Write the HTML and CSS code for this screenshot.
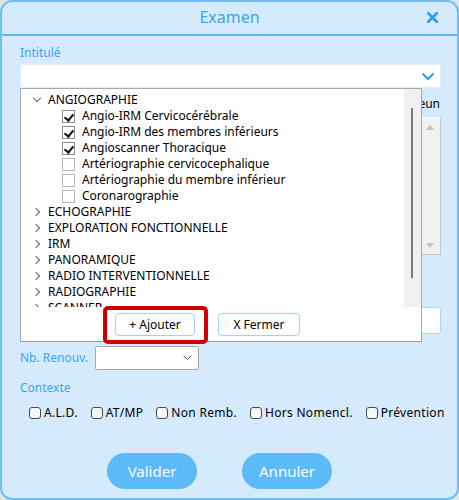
FILE: index.html
```html
<!DOCTYPE html>
<html lang="fr">
<head>
<meta charset="utf-8">
<link rel="stylesheet" href="styles.css">
</head>
<body>
<div class="dialog">
  <div class="titlebar">
    <span class="title">Examen</span>
    <span class="close"><svg width="11" height="11" viewBox="0 0 11 11"><path d="M1 1L10 10M10 1L1 10" stroke="#2f9ded" stroke-width="2.6" stroke-linecap="round"/></svg></span>
  </div>
  <div class="content">
    <div class="label">Intitulé</div>
    <div class="combo"><svg width="14" height="9" viewBox="0 0 14 9"><path d="M1.5 1.5L7 7L12.5 1.5" fill="none" stroke="#2f9ded" stroke-width="2"/></svg></div>
    <div class="middle">
      <div class="side">
        <div class="side-label">À jeun</div>
        <div class="listbox">
          <span class="arrow up"></span>
          <span class="arrow down"></span>
        </div>
        <div class="side-input"></div>
      </div>
      <div class="popup">
        <div class="tree-area">
          <div class="tree">
            <div class="row parent"><span class="chev open"></span>ANGIOGRAPHIE</div>
            <div class="row child"><span class="cb checked"></span>Angio-IRM Cervicocérébrale</div>
            <div class="row child"><span class="cb checked"></span>Angio-IRM des membres inférieurs</div>
            <div class="row child"><span class="cb checked"></span>Angioscanner Thoracique</div>
            <div class="row child"><span class="cb"></span>Artériographie cervicocephalique</div>
            <div class="row child"><span class="cb"></span>Artériographie du membre inférieur</div>
            <div class="row child"><span class="cb"></span>Coronarographie</div>
            <div class="row parent"><span class="chev"></span>ECHOGRAPHIE</div>
            <div class="row parent"><span class="chev"></span>EXPLORATION FONCTIONNELLE</div>
            <div class="row parent"><span class="chev"></span>IRM</div>
            <div class="row parent"><span class="chev"></span>PANORAMIQUE</div>
            <div class="row parent"><span class="chev"></span>RADIO INTERVENTIONNELLE</div>
            <div class="row parent"><span class="chev"></span>RADIOGRAPHIE</div>
            <div class="row parent"><span class="chev"></span>SCANNER</div>
          </div>
          <div class="scrollbar"><span class="thumb"></span></div>
        </div>
        <div class="popup-footer">
          <button class="pbtn">+ Ajouter</button>
          <button class="pbtn">X Fermer</button>
        </div>
      </div>
      <div class="highlight"></div>
    </div>
    <div class="renouv">
      <span class="label">Nb. Renouv.</span>
      <div class="select"><svg width="9" height="6" viewBox="0 0 9 6"><path d="M0.5 0.5L4.5 4.5L8.5 0.5" fill="none" stroke="#666" stroke-width="1"/></svg></div>
    </div>
    <div class="label ctx">Contexte</div>
    <div class="checks">
      <label class="chk"><span class="box"></span>A.L.D.</label>
      <label class="chk"><span class="box"></span>AT/MP</label>
      <label class="chk"><span class="box"></span>Non Remb.</label>
      <label class="chk"><span class="box"></span>Hors Nomencl.</label>
      <label class="chk"><span class="box"></span>Prévention</label>
    </div>
    <div class="actions">
      <button class="abtn">Valider</button>
      <button class="abtn">Annuler</button>
    </div>
  </div>
</div>
</body>
</html>
```
FILE: styles.css
```css
* { box-sizing: border-box; }
html, body { margin: 0; padding: 0; }
body {
  background: #e4e4e4;
  font-family: "Noto Sans", "Open Sans", sans-serif;
  width: 459px;
  height: 500px;
  overflow: hidden;
}
.dialog {
  width: 459px;
  height: 500px;
  border: 2px solid #6cc0f6;
  border-radius: 12px;
  background: #d6eafd;
  overflow: hidden;
}
.titlebar {
  height: 34px;
  border-bottom: 2px solid #5ab6f3;
  display: flex;
  align-items: center;
  justify-content: center;
  position: relative;
}
.title {
  font-size: 16px;
  color: #3aa4ee;
  margin-top: -2px;
}
.close {
  position: absolute;
  right: 19px;
  top: 10px;
  display: flex;
}
.content {
  padding: 9px 16px 0 18px;
}
.label {
  font-size: 12px;
  line-height: 16px;
  color: #3aa4ee;
}
.combo {
  margin-top: 3px;
  height: 24px;
  background: #fff;
  border: 1px solid #e6eef5;
  display: flex;
  align-items: center;
  justify-content: flex-end;
  padding-right: 5px;
}
.middle {
  position: relative;
  height: 258px;
}
.side {
  margin-left: auto;
  width: 140px;
  display: flex;
  flex-direction: column;
  align-items: flex-end;
  padding-top: 8px;
}
.side-label {
  font-size: 12px;
  line-height: 16px;
  color: #000;
  padding-right: 1px;
}
.listbox {
  margin-top: 5px;
  width: 100%;
  height: 138px;
  background: #f0f0f0;
  border: 1px solid #fff;
  border-right-color: #c8c8c8;
  border-bottom-color: #c8c8c8;
  position: relative;
}
.arrow {
  position: absolute;
  right: 6px;
  width: 0;
  height: 0;
  border-left: 4px solid transparent;
  border-right: 4px solid transparent;
}
.arrow.up { top: 7px; border-bottom: 5px solid #c2c2c2; }
.arrow.down { bottom: 6px; border-top: 5px solid #c2c2c2; }
.side-input {
  margin-top: 52px;
  width: 100%;
  height: 27px;
  background: #fff;
  border: 1px solid #a9d8f7;
  border-radius: 3px;
}
.popup {
  position: absolute;
  left: 0;
  top: 0;
  width: 402px;
  height: 254px;
  background: #fff;
  border: 1px solid #a8a8a8;
  border-bottom-color: #9a9a9a;
  display: flex;
  flex-direction: column;
}
.tree-area {
  height: 218px;
  display: flex;
}
.tree {
  flex: 1;
  overflow: hidden;
  padding-top: 3px;
}
.row {
  height: 16px;
  line-height: 16px;
  font-size: 12px;
  color: #000;
  display: flex;
  align-items: center;
  white-space: nowrap;
}
.row.parent { padding-left: 11px; }
.row.child { padding-left: 41px; }
.chev {
  width: 6px;
  height: 6px;
  border-right: 1.5px solid #666;
  border-bottom: 1.5px solid #666;
  transform: rotate(-45deg);
  margin-left: 1px;
  margin-right: 9px;
}
.chev.open {
  transform: rotate(45deg);
  margin-top: -4px;
  margin-left: 2px;
  margin-right: 8px;
}
.cb {
  width: 13px;
  height: 13px;
  border: 1px solid #8c8c8c;
  background: #fff;
  margin-right: 7px;
  position: relative;
}
.cb:not(.checked) { border-color: #b8b8b8; }
.cb.checked::after {
  content: "";
  position: absolute;
  left: 3px;
  top: 1px;
  width: 4px;
  height: 7px;
  border-right: 2px solid #111;
  border-bottom: 2px solid #111;
  transform: rotate(40deg);
}
.scrollbar {
  width: 17px;
  background: #f0f0f0;
  position: relative;
}
.thumb {
  position: absolute;
  left: 7px;
  top: 19px;
  width: 2px;
  height: 170px;
  background: #7a7a7a;
}
.popup-footer {
  flex: 1;
  display: flex;
  gap: 23px;
  padding: 6px 0 0 94px;
  align-items: flex-start;
}
.pbtn {
  height: 23px;
  background: #fff;
  border: 1px solid #9fd3f6;
  border-radius: 4px;
  font-family: inherit;
  font-size: 12px;
  color: #000;
  padding: 0;
}
.pbtn:first-child { width: 80px; }
.pbtn:last-child { width: 82px; }
.highlight {
  position: absolute;
  left: 83px;
  top: 218px;
  width: 105px;
  height: 38px;
  border: 4px solid #d10000;
  border-radius: 5px;
}
.renouv {
  display: flex;
  align-items: center;
  gap: 7px;
  margin-top: 0;
}
.select {
  width: 104px;
  height: 24px;
  background: #fff;
  border: 1px solid #a9a9a9;
  border-radius: 2px;
  display: flex;
  align-items: center;
  justify-content: flex-end;
  padding-right: 6px;
}
.ctx { margin-top: 10px; }
.checks {
  display: flex;
  align-items: center;
  margin-top: 9px;
  padding-left: 9px;
  gap: 13px;
  white-space: nowrap;
}
.chk {
  display: flex;
  flex-shrink: 0;
  align-items: center;
  font-size: 12px;
  line-height: 16px;
  color: #000;
  letter-spacing: 0.3px;
  white-space: nowrap;
}
.box {
  flex-shrink: 0;
  width: 12px;
  height: 12px;
  border: 1px solid #4a4a4a;
  border-radius: 3px;
  background: #f7f7f7;
  margin-right: 3px;
}
.actions {
  display: flex;
  justify-content: center;
  gap: 45px;
  margin-top: 32px;
  padding-right: 22px;
}
.abtn {
  width: 90px;
  height: 36px;
  border: none;
  border-radius: 18px;
  background: #5bbaf7;
  color: #fff;
  font-family: inherit;
  font-size: 15px;
  padding: 0;
}
```
